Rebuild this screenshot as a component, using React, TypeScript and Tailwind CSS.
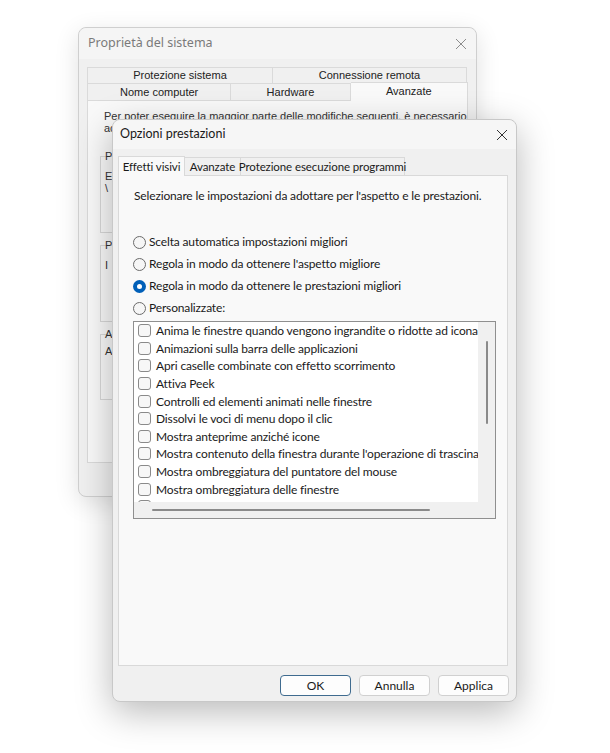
import React from 'react'

const ui = { fontFamily: 'Lato, "Noto Sans", sans-serif' }
const legacy = { fontFamily: '"Liberation Sans", Arial, sans-serif' }

const effects = [
  'Anima le finestre quando vengono ingrandite o ridotte ad icona',
  'Animazioni sulla barra delle applicazioni',
  'Apri caselle combinate con effetto scorrimento',
  'Attiva Peek',
  'Controlli ed elementi animati nelle finestre',
  'Dissolvi le voci di menu dopo il clic',
  'Mostra anteprime anziché icone',
  "Mostra contenuto della finestra durante l'operazione di trascinamento",
  'Mostra ombreggiatura del puntatore del mouse',
  'Mostra ombreggiatura delle finestre',
  'Mostra rettangolo di selezione trasparente',
]

const options = [
  'Scelta automatica impostazioni migliori',
  "Regola in modo da ottenere l'aspetto migliore",
  'Regola in modo da ottenere le prestazioni migliori',
  'Personalizzate:',
]

function CloseIcon({ color }: { color: string }) {
  return (
    <svg width="12" height="12" viewBox="0 0 12 12">
      <path d="M1 1 L11 11 M11 1 L1 11" stroke={color} strokeWidth="1" fill="none" />
    </svg>
  )
}

function Radio({ checked }: { checked: boolean }) {
  if (checked) {
    return (
      <span className="flex h-[13px] w-[13px] shrink-0 items-center justify-center rounded-full bg-[#005fb8]">
        <span className="h-[5px] w-[5px] rounded-full bg-white" />
      </span>
    )
  }
  return <span className="h-[13px] w-[13px] shrink-0 rounded-full border border-[#6b6b6b] bg-[#f6f6f6]" />
}

function BackWindow() {
  return (
    <div
      className="absolute left-[78px] top-[27px] flex h-[470px] w-[399px] flex-col rounded-lg border border-[#cfcfcf] bg-[#f0f0f0] shadow-[0_6px_24px_rgba(0,0,0,0.12)]"
      style={legacy}
    >
      <div className="flex h-[31px] items-center justify-between rounded-t-lg bg-[#f5f5f5] pl-[9px] pr-[9px]">
        <span className="text-[12.5px] text-[#7a7a7a]" style={{ fontFamily: '"Noto Sans", sans-serif' }}>
          Proprietà del sistema
        </span>
        <CloseIcon color="#8c8c8c" />
      </div>
      <div className="mx-[8px] mt-[8px] flex h-[16px] text-[11px] text-[#222]">
        <div className="flex w-[186px] items-center justify-center border border-b-0 border-[#dadada] bg-[#f0f0f0]">Protezione sistema</div>
        <div className="flex w-[194px] items-center justify-center border border-b-0 border-l-0 border-[#dadada] bg-[#f0f0f0]">Connessione remota</div>
      </div>
      <div className="mx-[8px] flex h-[18px] items-end text-[11px] text-[#222]">
        <div className="flex h-[18px] w-[145px] items-center justify-center border border-[#dadada] bg-[#f0f0f0]">Nome computer</div>
        <div className="flex h-[18px] w-[120px] items-center justify-center border border-l-0 border-[#dadada] bg-[#f0f0f0]">Hardware</div>
        <div className="relative flex h-[19px] w-[118px] items-start justify-center border border-b-0 border-l-0 border-[#dadada] bg-[#f9f9f9]">Avanzate</div>
      </div>
      <div className="mx-[8px] h-[362px] border border-t-0 border-[#dadada] bg-[#f9f9f9] px-[16px] pt-[9px] text-[11px] text-[#333]">
        <p className="leading-[12px] whitespace-nowrap">Per poter eseguire la maggior parte delle modifiche seguenti, è necessario</p>
        <p className="leading-[12px]">accedere come amministratore.</p>
        <div className="mt-[22px] flex flex-col gap-[12px]">
          <div className="-ml-[4px] h-[77px] border border-[#d8d8d8] pl-[4px]">
            <p className="-mt-[7px] leading-[12px]">Prestazioni</p>
            <p className="mt-[8px] leading-[12px]">E</p>
            <p className="leading-[12px]">\</p>
          </div>
          <div className="-ml-[4px] h-[77px] border border-[#d8d8d8] pl-[4px]">
            <p className="-mt-[7px] leading-[12px]">Profili utente</p>
            <p className="mt-[8px] leading-[12px]">I</p>
          </div>
          <div className="-ml-[4px] h-[66px] border border-[#d8d8d8] pl-[4px]">
            <p className="-mt-[7px] leading-[12px]">Avvio e ripristino</p>
            <p className="mt-[5px] leading-[12px]">A</p>
          </div>
        </div>
      </div>
    </div>
  )
}

function FrontWindow() {
  return (
    <div
      className="absolute left-[112px] top-[119px] flex h-[583px] w-[405px] flex-col rounded-lg border border-[#c8c8c8] bg-[#f0f0f0] shadow-[0_10px_36px_rgba(0,0,0,0.28)]"
      style={ui}
    >
      <div className="flex h-[29px] shrink-0 items-center justify-between rounded-t-lg bg-[#f6f6f6] pl-[7px] pr-[8px]">
        <span className="text-[12.5px] text-[#1a1a1a]">Opzioni prestazioni</span>
        <CloseIcon color="#333" />
      </div>
      <div className="flex h-[26px] items-end pl-[5px] text-[11.5px] tracking-[-0.1px] text-[#1a1a1a] whitespace-nowrap">
        <div className="relative z-10 -mb-px flex h-[20px] w-[67px] items-start justify-center border border-b-0 border-[#d9d9d9] bg-[#f9f9f9] pt-[1px]">
          Effetti visivi
        </div>
        <div className="flex h-[18px] w-[56px] items-center justify-center border border-b-0 border-l-0 border-[#d9d9d9] bg-[#f0f0f0]">Avanzate</div>
        <div className="flex h-[18px] w-[164px] items-center justify-center border border-b-0 border-l-0 border-[#d9d9d9] bg-[#f0f0f0]">
          Protezione esecuzione programmi
        </div>
      </div>
      <div className="ml-[5px] mr-[8px] flex h-[491px] flex-col border border-[#d9d9d9] bg-[#f9f9f9] px-[14px] pt-[11px] text-[12px] tracking-[-0.15px] text-[#1a1a1a]">
        <p className="pl-[1px] leading-[18px] whitespace-nowrap">Selezionare le impostazioni da adottare per l'aspetto e le prestazioni.</p>
        <div className="mt-[28px] flex flex-col gap-[4px]">
          {options.map((o, i) => (
            <div key={o} className="flex h-[18px] items-center gap-[3px]">
              <Radio checked={i === 2} />
              <span className="leading-[18px]">{o}</span>
            </div>
          ))}
        </div>
        <div className="mt-[4px] flex h-[198px] w-[363px] flex-col border border-[#8f8f8f] bg-white">
          <div className="flex min-h-0 flex-1">
            <div className="min-w-0 flex-1 overflow-hidden">
              {effects.map((e) => (
                <div key={e} className="flex h-[17.6px] items-center gap-[5px] pl-[4px] whitespace-nowrap">
                  <span className="h-[13px] w-[13px] shrink-0 rounded-[3px] border border-[#8a8a8a] bg-[#f7f7f7]" />
                  <span className="leading-[17px]">{e}</span>
                </div>
              ))}
            </div>
            <div className="flex w-[17px] shrink-0 justify-center bg-[#f0f0f0] pt-[19px]">
              <div className="h-[83px] w-[2px] rounded-full bg-[#8a8a8a]" />
            </div>
          </div>
          <div className="flex h-[16px] shrink-0 bg-[#f0f0f0]">
            <div className="flex flex-1 items-center pl-[18px]">
              <div className="h-[2px] w-[278px] rounded-full bg-[#8a8a8a]" />
            </div>
            <div className="w-[17px] bg-[#f0f0f0]" />
          </div>
        </div>
      </div>
      <div className="mt-[9px] flex justify-end gap-[8px] pr-[7px] text-[12px] text-[#1a1a1a]">
        <button className="flex h-[21px] w-[71px] items-center justify-center rounded-[4px] border border-[#3f6b8f] bg-[#fdfdfd]">OK</button>
        <button className="flex h-[21px] w-[71px] items-center justify-center rounded-[4px] border border-[#d0d0d0] bg-[#fdfdfd]">Annulla</button>
        <button className="flex h-[21px] w-[71px] items-center justify-center rounded-[4px] border border-[#d0d0d0] bg-[#fdfdfd]">Applica</button>
      </div>
    </div>
  )
}

export default function App() {
  return (
    <div className="relative h-[753px] w-[610px] overflow-hidden bg-white">
      <BackWindow />
      <FrontWindow />
    </div>
  )
}
